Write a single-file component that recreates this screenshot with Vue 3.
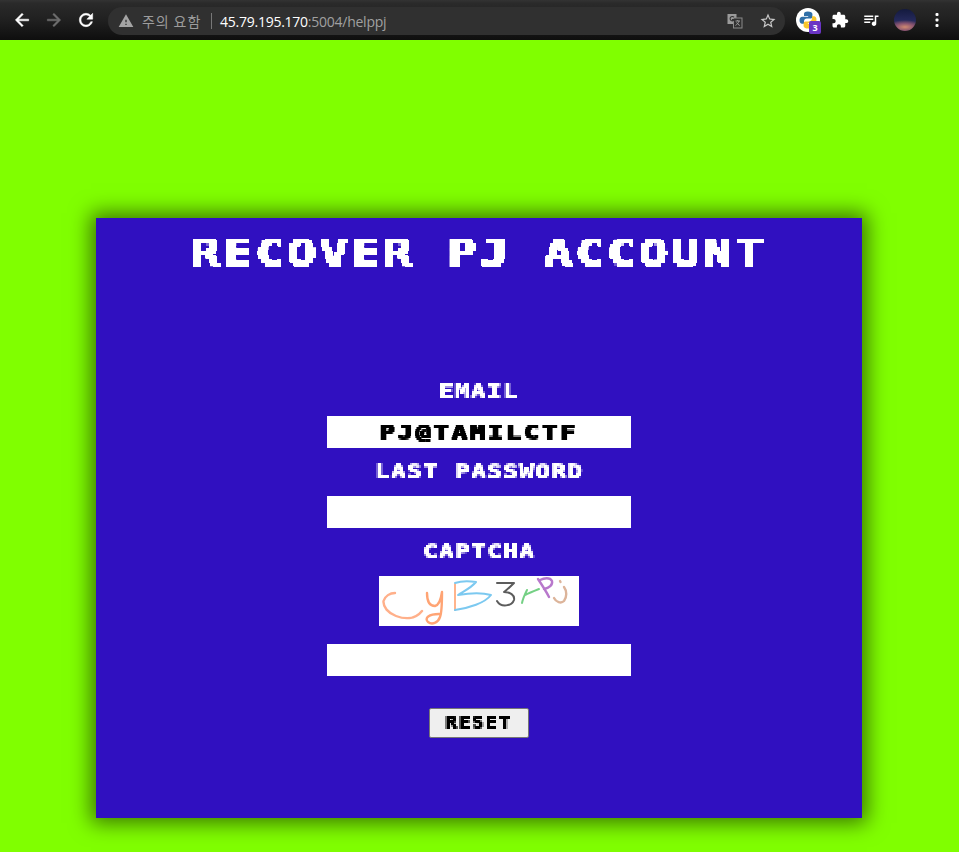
<script setup>
const captchaStrokes = [
  { color: '#ffb08a', width: 2.4, d: 'M16 17 C11 17 6 20 4.5 25 C4 31 9 37 17 40 C25 43 36 44 43 35' },
  { color: '#ffa474', width: 2.4, d: 'M48 17 C48 24 50 30 56 30 C60 29 62 23 63 16 C63 26 63 36 61 41 C59 47 53 49 49 46 C45 42 50 38 60 38' },
  { color: '#ffb48c', width: 2.0, d: 'M76 8 L76 34' },
  { color: '#7cc9f0', width: 2.0, d: 'M76 7 C82 5 90 5 97 6 C92 12 85 15 79 19 C90 17 102 16 112 19 C106 27 90 32 76 34' },
  { color: '#5c5c5c', width: 2.0, d: 'M118 7 L135 7 C131 11 128 14 125 16 C131 16 136 19 135 24 C133 30 122 32 118 25' },
  { color: '#74d084', width: 2.0, d: 'M143 27 C144 22 146 18 148 14 M146 19 C150 17 155 15 160 13' },
  { color: '#b878cc', width: 2.4, d: 'M159 3 C163 9 167 15 170 21 M161 4 C165 2 171 1 173 5 C174 9 170 12 165 13' },
  { color: '#dcb49a', width: 2.4, d: 'M185 11 C188 15 188 21 185 25 C182 28 177 26 175 22 M181 5 L181.5 6' }
]
</script>

<template>
  <div class="page">
    <svg class="defs" width="0" height="0" aria-hidden="true">
      <filter id="px4" x="0" y="0" width="1" height="1" color-interpolation-filters="sRGB">
        <feFlood x="1" y="1" width="2" height="2" />
        <feComposite width="4" height="4" />
        <feTile result="grid" />
        <feComposite in="SourceGraphic" in2="grid" operator="in" />
        <feMorphology operator="dilate" radius="1" />
        <feComponentTransfer>
          <feFuncA type="linear" slope="8" intercept="-5" />
        </feComponentTransfer>
      </filter>
      <filter id="px2" x="0" y="0" width="1" height="1" color-interpolation-filters="sRGB">
        <feFlood x="0" y="0" width="1" height="1" />
        <feComposite width="2" height="2" />
        <feTile result="grid" />
        <feComposite in="SourceGraphic" in2="grid" operator="in" />
        <feMorphology operator="dilate" radius="1" />
      </filter>
    </svg>

    <header class="browser">
      <nav class="nav">
        <svg class="ico" viewBox="0 0 24 24"><path fill="#fff" stroke="#fff" stroke-width=".6" d="M20 11H7.83l5.59-5.59L12 4l-8 8 8 8 1.41-1.41L7.83 13H20v-2z" /></svg>
        <svg class="ico" viewBox="0 0 24 24"><path fill="#6f6f6f" stroke="#6f6f6f" stroke-width=".6" d="M4 11h12.17l-5.59-5.59L12 4l8 8-8 8-1.41-1.41L16.17 13H4v-2z" /></svg>
        <svg class="ico" viewBox="0 0 24 24"><path fill="#fff" stroke="#fff" stroke-width=".6" d="M17.65 6.35C16.2 4.9 14.21 4 12 4c-4.42 0-7.99 3.58-7.99 8s3.57 8 7.99 8c3.73 0 6.84-2.55 7.73-6h-2.08c-.82 2.33-3.04 4-5.65 4-3.31 0-6-2.69-6-6s2.69-6 6-6c1.66 0 3.14.69 4.22 1.78L13 11h7V4l-2.35 2.35z" /></svg>
      </nav>
      <div class="omnibox">
        <svg class="warn" viewBox="0 0 24 24"><path fill="#a4a4a4" d="M1 21h22L12 2 1 21zm12-3h-2v-2h2v2zm0-4h-2v-4h2v4z" /></svg>
        <span class="warn-text">주의 요함</span>
        <span class="sep"></span>
        <span class="url"><span class="host">45.79.195.170</span>:5004/helppj</span>
        <svg class="translate" viewBox="0 0 16 16">
          <rect x="0.5" y="1" width="9" height="10" fill="#9a9a9a" />
          <rect x="6.5" y="5" width="8.5" height="10" fill="#303030" stroke="#8a8a8a" />
          <path d="M7 4.2a2.2 2.2 0 1 0 .3 2.4H5" fill="none" stroke="#333" stroke-width="1.1" />
          <path d="M8.5 8h4.5M10.7 7v1M12 8c-.5 2-2 3.6-3.5 4.4M9.6 9.5c.7 1.3 1.8 2.3 3.2 3" fill="none" stroke="#9a9a9a" />
        </svg>
        <svg class="star" viewBox="0 0 24 24"><path fill="#c8c8c8" d="M22 9.24l-7.19-.62L12 2 9.19 8.63 2 9.24l5.46 4.73L5.82 21 12 17.27 18.18 21l-1.63-7.03L22 9.24zM12 15.4l-3.76 2.27 1-4.28-3.32-2.88 4.38-.38L12 6.1l1.71 4.04 4.38.38-3.32 2.88 1 4.28L12 15.4z" /></svg>
      </div>
      <div class="tools">
        <div class="ext">
          <svg class="python" viewBox="0 0 24 24">
            <circle cx="12" cy="12" r="12" fill="#fff" />
            <path fill="#2f6fa8" d="M11.8 3.5c-3 0-3.8 1.2-3.8 2.6V8h4.2v.8H6.2C4.6 8.8 3.5 10 3.5 12.2s1 3.6 2.6 3.6H8v-2.4c0-1.6 1.3-2.8 2.8-2.8h3.6c1.2 0 2-.9 2-2.1V6.1c0-1.5-1.7-2.6-4.6-2.6z" />
            <path fill="#f8c52c" d="M12.2 20.5c3 0 3.8-1.2 3.8-2.6V16h-4.2v-.8h6c1.6 0 2.7-1.2 2.7-3.4s-1-3.6-2.6-3.6H16v2.4c0 1.6-1.3 2.8-2.8 2.8H9.6c-1.2 0-2 .9-2 2.1v2.4c0 1.5 1.7 2.6 4.6 2.6z" />
          </svg>
          <span class="badge">3</span>
        </div>
        <svg class="tool puzzle" viewBox="0 0 24 24"><path fill="#fff" d="M20.5 11H19V7c0-1.1-.9-2-2-2h-4V3.5C13 2.12 11.88 1 10.5 1S8 2.12 8 3.5V5H4c-1.1 0-1.99.9-1.99 2v3.8H3.5c1.49 0 2.7 1.21 2.7 2.7s-1.21 2.7-2.7 2.7H2V20c0 1.1.9 2 2 2h3.8v-1.5c0-1.49 1.21-2.7 2.7-2.7 1.49 0 2.7 1.21 2.7 2.7V22H17c1.1 0 2-.9 2-2v-4h1.5c1.38 0 2.5-1.12 2.5-2.5S21.88 11 20.5 11z" /></svg>
        <svg class="tool music" viewBox="0 0 24 24"><path fill="#fff" d="M15 6H3v2h12V6zm0 4H3v2h12v-2zM3 16h8v-2H3v2zM17 6v8.18c-.31-.11-.65-.18-1-.18-1.66 0-3 1.34-3 3s1.34 3 3 3 3-1.34 3-3V8h3V6h-5z" /></svg>
        <div class="avatar"></div>
        <svg class="dots" viewBox="0 0 4 16"><rect x="0.5" y="1" width="3" height="3" rx="1" fill="#fff" /><rect x="0.5" y="6.5" width="3" height="3" rx="1" fill="#fff" /><rect x="0.5" y="12" width="3" height="3" rx="1" fill="#fff" /></svg>
      </div>
    </header>

    <main class="viewport">
      <section class="card">
        <h1 class="title"><span class="wide">RECOVER PJ ACCOUNT</span></h1>
        <form class="form" @submit.prevent>
          <label class="label"><span class="wide">EMAIL</span></label>
          <div class="field"><input class="input" value="PJ@TAMILCTF" /></div>
          <label class="label"><span class="wide">LAST PASSWORD</span></label>
          <div class="field"><input class="input" /></div>
          <label class="label"><span class="wide">CAPTCHA</span></label>
          <svg class="captcha" viewBox="0 0 200 50">
            <rect width="200" height="50" fill="#fff" />
            <g fill="none" stroke-linecap="round" stroke-linejoin="round" class="strokes">
              <path v-for="(s, i) in captchaStrokes" :key="i" :d="s.d" :stroke="s.color" :stroke-width="s.width" />
            </g>
          </svg>
          <div class="field field-answer"><input class="input" /></div>
          <button class="reset" type="submit"><span class="reset-text"><span class="wide">RESET</span></span></button>
        </form>
      </section>
    </main>
  </div>
</template>

<style>
html, body { margin: 0; background: #80ff00; }
</style>

<style scoped>
.page { width: 959px; height: 852px; overflow: hidden; background: #80ff00; display: flex; flex-direction: column; }
.defs { position: absolute; }

.browser {
  height: 40px; flex: none; display: flex; align-items: center; box-sizing: border-box;
  background: linear-gradient(#333 0, #2a2a2a 8%, #202020 50%, #0e0e0e 100%);
  font-family: "Open Sans", "Noto Sans CJK KR", sans-serif; font-size: 14px;
}
.nav { display: flex; width: 108px; padding-left: 12px; gap: 12px; box-sizing: border-box; }
.ico { width: 20px; height: 20px; display: block; }
.omnibox {
  width: 677px; height: 28px; margin-top: 2px; background: #303030; border-radius: 14px;
  display: flex; align-items: center; padding-left: 10px; box-sizing: border-box;
}
.warn { width: 16px; height: 16px; flex: none; }
.warn-text { margin-left: 8px; width: 60px; color: #9c9c9c; font-family: "Noto Sans CJK KR", sans-serif; font-size: 14px; letter-spacing: .9px; white-space: nowrap; }
.sep { width: 1px; height: 16px; background: #777; margin-left: 9px; }
.url { margin-left: 8px; color: #a0a0a0; font-size: 14px; letter-spacing: -0.25px; white-space: nowrap; flex: 1; }
.host { color: #fff; }
.translate { width: 16px; height: 16px; flex: none; margin-right: 16px; }
.star { width: 18px; height: 18px; flex: none; margin-right: 8px; }

.tools { flex: 1; display: flex; align-items: center; padding-left: 11px; }
.ext { position: relative; width: 24px; height: 24px; }
.python { width: 24px; height: 24px; display: block; }
.badge {
  position: absolute; left: 13px; top: 13px; width: 12px; height: 13px; background: #6a35c4; border-radius: 2px;
  color: #fff; font: 700 9px/13px "Open Sans", sans-serif; text-align: center;
}
.tool { width: 18px; height: 18px; flex: none; }
.puzzle { margin-left: 11px; }
.music { margin-left: 13px; }
.avatar {
  width: 22px; height: 22px; border-radius: 50%; margin-left: 14px;
  background: radial-gradient(ellipse 18px 7px at 50% 82%, #d08a70 0, #8a5570 50%, transparent 100%), linear-gradient(#141a3e 0, #262a5c 55%, #4c3a64 100%);
}
.dots { width: 4px; height: 16px; margin-left: 19px; }

.viewport { flex: 1; padding: 178px 0 0 96px; }
.card {
  width: 766px; height: 600px; background: #3010c0; box-shadow: 0 0 20px 5px rgba(0, 0, 0, .55);
  display: flex; flex-direction: column; align-items: center;
  font-family: "DejaVu Sans Mono", monospace; font-weight: 700; color: #fff; padding-top: 21px; box-sizing: border-box;
}
.wide { display: inline-block; transform: scaleX(1.3); white-space: pre; }
.title {
  margin: 0; font-size: 36.8px; line-height: 30px; letter-spacing: 2.45px; font-weight: 700; filter: url(#px4);
  -webkit-text-stroke: 1.4px #fff;
  height: 32px; width: 700px; text-align: center; white-space: nowrap;
}
.form { display: flex; flex-direction: column; align-items: center; margin-top: 113px; width: 304px; }
.label { height: 16px; line-height: 14px; font-size: 19px; letter-spacing: .9px; margin-bottom: 16px; width: 304px; text-align: center; filter: url(#px2); }
.field { width: 304px; height: 32px; background: #fff; margin-bottom: 16px; overflow: hidden; }
.input {
  display: block; width: 243.2px; height: 32px; border: 0; padding: 0; margin: 0; background: transparent; outline: 0;
  transform: scaleX(1.25); transform-origin: 0 0; text-align: center; color: #000;
  font: 700 20px "DejaVu Sans Mono", monospace; letter-spacing: 2.4px; filter: url(#px2);
}
.captcha { width: 200px; height: 50px; display: block; margin-bottom: 18px; }
.strokes { filter: blur(.6px); }
.field-answer { margin-bottom: 32px; }
.reset {
  width: 100px; height: 30px; box-sizing: border-box; padding: 0; background: #efefef; color: #000;
  border: 1px solid #767676; border-radius: 2px; font: 700 15px/28px "DejaVu Sans Mono", monospace; letter-spacing: 1.3px;
  display: block;
}
.reset-text { display: block; height: 28px; filter: url(#px2); }
</style>
